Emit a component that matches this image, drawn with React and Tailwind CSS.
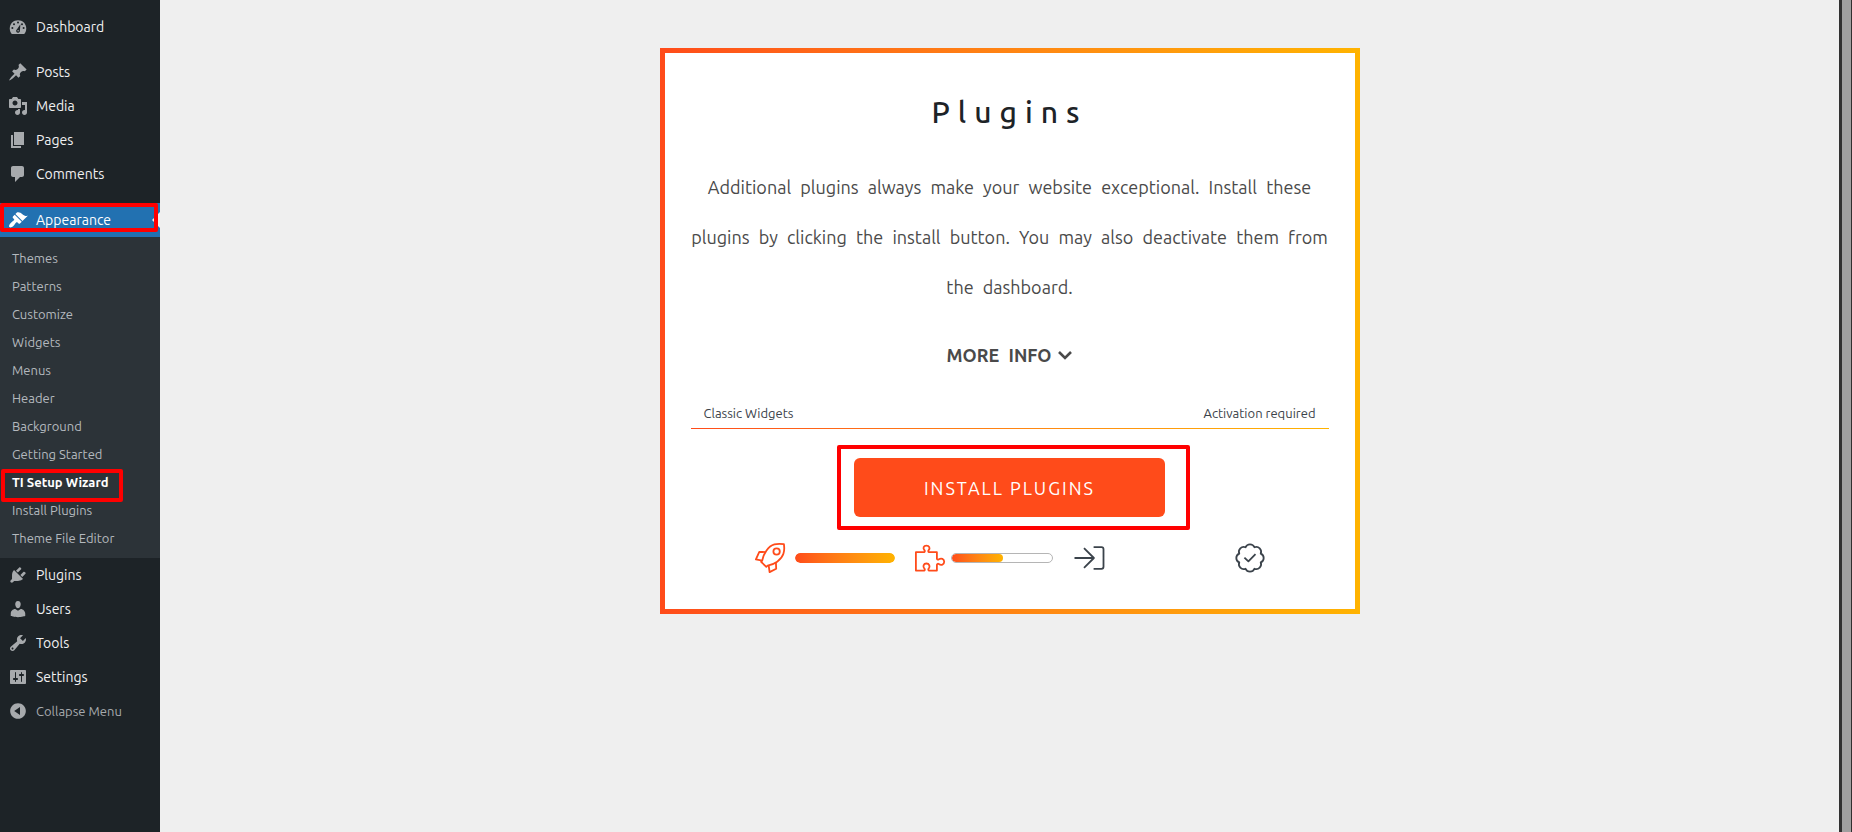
import { useState } from 'react'

// ── Menu data ───────────────────────────────────────────────────────────────
const ICONS = {
  post: 'M10.44 3.02l1.82-1.82 6.36 6.35-1.83 1.82c-1.05-.68-2.48-.57-3.41.36l-.75.75c-.92.93-1.04 2.35-.35 3.41l-1.83 1.82-2.41-2.41-2.8 2.79c-.42.42-3.38 2.71-3.8 2.29s1.86-3.39 2.28-3.81l2.79-2.79L4.1 9.36l1.83-1.82c1.05.69 2.48.57 3.4-.36l.75-.75c.93-.92 1.05-2.35.36-3.41z',
  media: 'M13 11V4c0-.55-.45-1-1-1h-1.67L9 1H5L3.67 3H2c-.55 0-1 .45-1 1v7c0 .55.45 1 1 1h10c.55 0 1-.45 1-1zM7 4.5c1.38 0 2.5 1.12 2.5 2.5S8.38 9.5 7 9.5 4.5 8.38 4.5 7 5.62 4.5 7 4.5zM14 6h5v10.5c0 1.38-1.12 2.5-2.5 2.5S14 17.88 14 16.5s1.12-2.5 2.5-2.5c.17 0 .34.02.5.05V9h-3V6zm-4 8.05V13h2v3.5c0 1.38-1.12 2.5-2.5 2.5S7 17.88 7 16.5 8.12 14 9.5 14c.17 0 .34.02.5.05z',
  page: 'M6 15V2h10v13H6zm-1 1h8v2H3V5h2v11z',
  comments: 'M5 2h9c1.1 0 2 .9 2 2v7c0 1.1-.9 2-2 2h-2l-5 5v-5H5c-1.1 0-2-.9-2-2V4c0-1.1.9-2 2-2z',
  appearance: 'M14.48 11.06L7.41 3.99l1.5-1.5c.5-.56 2.3-.47 3.51.32 1.21.8 1.43 1.28 2.91 2.1 1.18.64 2.45 1.26 4.45.85zm-.71.71L6.7 4.7 4.93 6.47c-.39.39-.39 1.02 0 1.41l1.06 1.06c.39.39.39 1.03 0 1.42-.6.6-1.43 1.11-2.21 1.69-.35.26-.7.53-1.01.84C1.43 14.23.4 16.08 1.4 17.07c.99 1 2.84-.03 4.18-1.36.31-.31.58-.66.85-1.02.57-.78 1.08-1.61 1.69-2.21.39-.39 1.02-.39 1.41 0l1.06 1.06c.39.39 1.02.39 1.41 0z',
  plugins: 'M13.11 4.36L9.87 7.6 8 5.73l3.24-3.24c.35-.34 1.05-.2 1.56.32.52.51.66 1.21.31 1.55zm-8 1.77l.91-1.12 9.01 9.01-1.19.84c-.71.71-2.63 1.16-3.82 1.16H6.14L4.9 17.26c-.59.59-1.54.59-2.12 0-.59-.58-.59-1.53 0-2.12l1.24-1.24v-3.88c0-1.13.4-3.19 1.09-3.89zm7.26 3.97l3.24-3.24c.34-.35 1.04-.21 1.55.31.52.51.66 1.21.31 1.55l-3.24 3.25z',
  users: 'M10 9.25c-2.27 0-2.73-3.44-2.73-3.44C7 4.02 7.82 2 9.97 2c2.16 0 2.98 2.02 2.71 3.81 0 0-.41 3.44-2.68 3.44zm0 2.57L12.72 10c2.39 0 4.52 2.33 4.52 4.53v2.49s-3.65 1.13-7.24 1.13c-3.65 0-7.24-1.13-7.24-1.13v-2.49c0-2.25 1.94-4.48 4.47-4.48z',
  tools: 'M16.68 9.77c-1.34 1.34-3.3 1.67-4.95.99l-5.41 6.52c-.99.99-2.59.99-3.58 0s-.99-2.59 0-3.57l6.52-5.42c-.68-1.65-.35-3.61.99-4.95 1.28-1.28 3.12-1.62 4.72-1.06l-2.89 2.89 2.82 2.82 2.86-2.87c.53 1.58.18 3.39-1.08 4.65zM3.81 16.21c.4.39 1.04.39 1.43 0 .4-.4.4-1.04 0-1.43-.39-.4-1.03-.4-1.43 0-.39.39-.39 1.03 0 1.43z',
  settings: 'M18 16V4c0-.55-.45-1-1-1H3c-.55 0-1 .45-1 1v12c0 .55.45 1 1 1h14c.55 0 1-.45 1-1zM8 11h1c.55 0 1 .45 1 1s-.45 1-1 1H8v1.5c0 .28-.22.5-.5.5s-.5-.22-.5-.5V13H6c-.55 0-1-.45-1-1s.45-1 1-1h1V5.5c0-.28.22-.5.5-.5s.5.22.5.5V11zm5-2h-1c-.55 0-1-.45-1-1s.45-1 1-1h1V5.5c0-.28.22-.5.5-.5s.5.22.5.5V7h1c.55 0 1 .45 1 1s-.45 1-1 1h-1v5.5c0 .28-.22.5-.5.5s-.5-.22-.5-.5V9z',
  collapse: 'M10 2.16c4.33 0 7.84 3.51 7.84 7.84s-3.51 7.84-7.84 7.84S2.16 14.33 2.16 10 5.71 2.16 10 2.16zm2 11.72V6.12L6.18 9.97z',
}

const CONTENT_MENU = [
  { icon: 'post', label: 'Posts' },
  { icon: 'media', label: 'Media' },
  { icon: 'page', label: 'Pages' },
  { icon: 'comments', label: 'Comments' },
]

const SUBMENU = [
  'Themes', 'Patterns', 'Customize', 'Widgets', 'Menus', 'Header', 'Background',
  'Getting Started', 'TI Setup Wizard', 'Install Plugins', 'Theme File Editor',
]

const ADMIN_MENU = [
  { icon: 'plugins', label: 'Plugins' },
  { icon: 'users', label: 'Users' },
  { icon: 'tools', label: 'Tools' },
  { icon: 'settings', label: 'Settings' },
]

// ── Icons ───────────────────────────────────────────────────────────────────
const MenuIcon = ({ name }) => (
  <svg className="size-5 shrink-0" viewBox="0 0 20 20" fill="currentColor" aria-hidden="true">
    {name === 'dashboard' ? (
      <>
        <path d="M3.76 17h12.48c1.34-1.5 2.01-3.6 2.01-5.6C18.25 6.7 14.56 3.2 10 3.2S1.75 6.7 1.75 11.4c0 2 .67 4.1 2.01 5.6z" />
        <g fill="#1d2327">
          <circle cx="10" cy="5.6" r="1" />
          <circle cx="6" cy="7.2" r="1" />
          <circle cx="14" cy="7.2" r="1" />
          <circle cx="4.4" cy="11" r="1" />
          <circle cx="15.6" cy="11" r="1" />
          <path d="M12.4 7.3l-.5 6.2a1.9 1.9 0 1 1-2.9-1.2z" />
        </g>
        <circle cx="10.1" cy="13.7" r=".7" />
      </>
    ) : (
      <path fillRule="evenodd" d={ICONS[name]} />
    )}
  </svg>
)

const StepIcon = ({ children, className }) => (
  <svg
    className={`size-[30px] shrink-0 overflow-visible ${className}`}
    viewBox="0 0 30 30"
    fill="none"
    stroke="currentColor"
    strokeWidth="1.8"
    strokeLinejoin="round"
    aria-hidden="true"
  >
    {children}
  </svg>
)

const RocketIcon = () => (
  <StepIcon className="text-[#ff4b1a]">
    <path d="M7.2 17.6C8.4 11 13 3.2 19.4 1.4c3.2-.9 6.6-.6 9.5-.3.5 3.3.6 6.6-.5 9.7-2 6.3-9.3 10.7-15.8 11.8l-1.3 1.2-5.2-5z" />
    <circle cx="21.6" cy="8.5" r="3.2" />
    <path d="M10.6 9.1l-6.3-.3L.9 16.4l6.3 1.2M20.9 19.4l.3 6.3-6.6 3.4-.9-6.5" />
  </StepIcon>
)

const PuzzleIcon = () => (
  <StepIcon className="text-[#ff4b1a]">
    <path d="M.9 9.2h8.3c.9-.4.8-1.3.2-2C7.7 5.2 8.5 2.6 11.4 2.6s4 2.6 2.3 4.6c-.6.7-.6 1.6.3 2h7.9v6.5c.3 1.1 1.2 1.2 2 .6 2.3-1.6 5.3-.4 5.3 2.4s-3 4-5.3 2.4c-.8-.6-1.7-.5-2 .6v5.9H14c-.9-.4-.9-1.2-.3-1.9 1.8-2 .6-5.2-2.300-5.200s-3.900 3.200-2 5.200c.6.700.7 1.500-.2 1.900H.9z" />
  </StepIcon>
)

const EnterIcon = () => (
  <StepIcon className="text-[#3b434b]">
    <path d="M-.5 15h20M9 5.200l9.900 9.800L9 24.800M18.600 4.200h7.900a2 2 0 0 1 2 2v17.600a2 2 0 0 1-2 2h-7.900" />
  </StepIcon>
)

// Eight equal lobes around (15, 15)
const BadgeIcon = () => (
  <StepIcon className="text-[#3b434b]">
    <path d="M25.72 19.44A4.8 4.8 0 0 1 19.44 25.72A4.8 4.8 0 0 1 10.56 25.72A4.8 4.8 0 0 1 4.28 19.44A4.8 4.8 0 0 1 4.28 10.56A4.8 4.8 0 0 1 10.56 4.28A4.8 4.8 0 0 1 19.44 4.28A4.8 4.8 0 0 1 25.72 10.56A4.8 4.8 0 0 1 25.72 19.44z" />
    <path d="M9.4 14.6l4 3.8 7.1-7.3" />
  </StepIcon>
)

// ── Sidebar ─────────────────────────────────────────────────────────────────
const MenuLink = ({ icon, label }) => (
  <a href="#" className="flex h-[34px] items-center gap-2 pl-2 text-[#f0f0f1]">
    <span className="text-[#a7aaad]"><MenuIcon name={icon} /></span>
    {label}
  </a>
)

const Sidebar = ({ current, onSelect }) => (
  <nav className="w-40 shrink-0 bg-[#1d2327] pt-[10px] text-sm" aria-label="Main menu">
    <MenuLink icon="dashboard" label="Dashboard" />

    <div className="mt-[11px]">
      {CONTENT_MENU.map((item) => <MenuLink key={item.label} {...item} />)}
    </div>

    <div className="relative mt-3">
      <a href="#" className="flex h-[34px] items-center gap-2 bg-[#2271b1] pl-2 text-white">
        <MenuIcon name="appearance" />
        Appearance
      </a>
      <span className="absolute top-[9px] right-0 border-y-8 border-r-8 border-y-transparent border-r-[#f0f0f1]" />
      <span className="absolute top-0 left-0 h-[29px] w-[158px] rounded-xs border-4 border-[#ff0000]" />
    </div>

    <ul className="bg-[#2c3338] pt-[7px] pb-[6px] text-[13px] text-[#b4b9be]">
      {SUBMENU.map((label) => (
        <li key={label} className="relative">
          <a
            href="#"
            onClick={() => onSelect(label)}
            className={`flex h-7 items-center pl-3 ${current === label ? 'font-semibold text-white' : ''}`}
          >
            {label}
          </a>
          {current === label && (
            <span className="absolute top-px left-px h-[33px] w-[122px] rounded-xs border-4 border-[#ff0000]" />
          )}
        </li>
      ))}
    </ul>

    {ADMIN_MENU.map((item) => <MenuLink key={item.label} {...item} />)}
    <button type="button" className="flex h-[34px] items-center gap-2 pl-2 text-[13px] text-[#a7aaad]">
      <MenuIcon name="collapse" />
      Collapse Menu
    </button>
  </nav>
)

// ── Wizard steps ────────────────────────────────────────────────────────────
const ProgressBar = ({ value }) => (
  <div className={`h-[10px] overflow-hidden rounded-full ${value < 100 ? 'w-[102px] border border-[#b5b5b5]' : 'w-[100px]'}`}>
    <div
      className="h-full rounded-full bg-linear-to-r from-[#ff4b1a] to-[#ffb300]"
      style={{ width: `${value}%` }}
    />
  </div>
)

const Steps = () => (
  <ol className="mx-auto mt-[26px] flex w-[510px] items-center">
    <li className="flex w-40 items-center gap-2.5"><RocketIcon /><ProgressBar value={100} /></li>
    <li className="flex w-40 items-center gap-1.5"><PuzzleIcon /><ProgressBar value={51} /></li>
    <li className="w-40"><EnterIcon /></li>
    <li><BadgeIcon /></li>
  </ol>
)

const App = () => {
  const [current, setCurrent] = useState('TI Setup Wizard')

  return (
    <div className="flex min-h-screen bg-[#efefef] font-['Ubuntu','Noto_Sans',sans-serif]">
      <Sidebar current={current} onSelect={setCurrent} />

      <main className="flex-1 pt-12 pl-5">
        <section className="mx-auto max-w-[700px] bg-linear-to-r from-[#ff4b1a] to-[#ffb300] p-[5px] text-center">
          <div className="bg-white px-[26px] pt-[39px] pb-9">
            <h1 className="text-[30px] leading-10 font-medium tracking-[8px] text-[#1d2327]">Plugins</h1>

            <p className="mt-[30px] text-lg leading-[50px] text-[#4a4a4a] [word-spacing:5px]">
              Additional plugins always make your website exceptional. Install these plugins by clicking
              the install button. You may also deactivate them from the dashboard.
            </p>

            <button type="button" className="mt-[23px] flex h-10 w-full items-center justify-center gap-[5px] text-lg font-semibold text-[#4a4a4a] [word-spacing:5px]">
              MORE INFO
              <svg className="size-4" viewBox="0 0 16 16" fill="none" stroke="currentColor" strokeWidth="2.6" aria-hidden="true">
                <path d="M2 5l6 6 6-6" />
              </svg>
            </button>

            <div className="mt-7 flex justify-between px-[13px] pb-[5px] text-[13px] leading-5 text-[#3c434a]">
              <span>Classic Widgets</span>
              <span>Activation required</span>
            </div>
            <div className="h-px bg-linear-to-r from-[#ff4b1a] to-[#ffb300]" />

            <div className="relative mx-auto mt-[29px] w-[311px]">
              <button type="button" className="h-[59px] w-full rounded-md bg-[#ff4b1a] text-lg tracking-[2px] text-white">
                INSTALL PLUGINS
              </button>
              <span className="pointer-events-none absolute -top-[13px] -right-[25px] -bottom-[13px] -left-[17px] rounded-xs border-4 border-[#ff0000]" />
            </div>

            <Steps />
          </div>
        </section>
      </main>

      {/* Scroll track */}
      <div className="w-[13px] shrink-0 border-r border-l-3 border-[#303030] bg-[#9f9f9f]" />
    </div>
  )
}

export default App
